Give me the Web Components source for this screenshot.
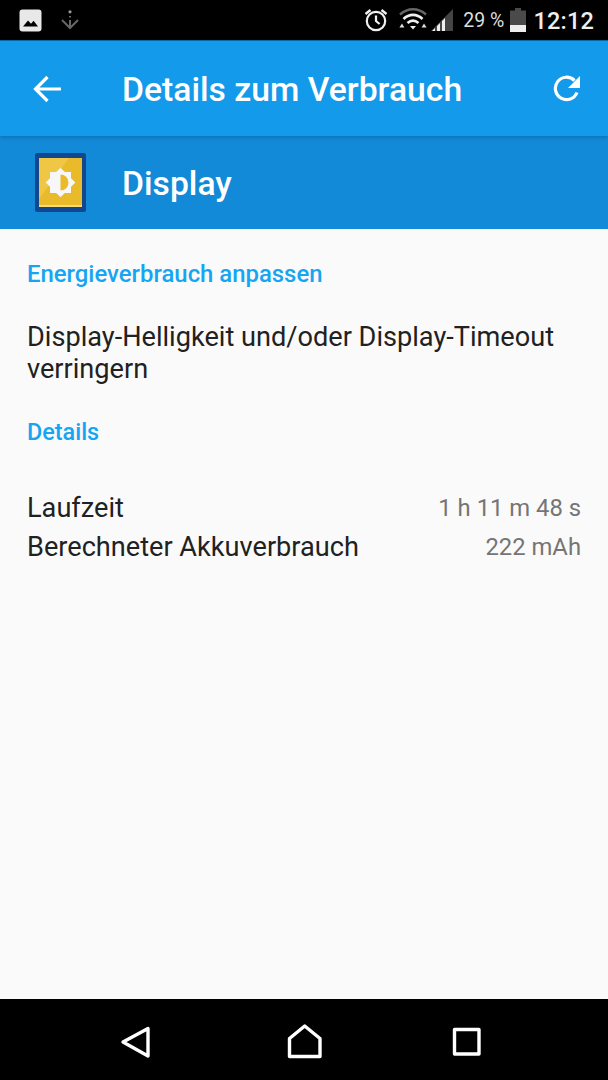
<!DOCTYPE html>
<html><head><meta charset="utf-8"><style>
html,body{margin:0;padding:0;background:#fafafa;font-family:Roboto,sans-serif}
</style></head><body>
<phone-screen>
<status-bar></status-bar>
<action-bar title="Details zum Verbrauch"></action-bar>
<app-header title="Display"></app-header>
<main-content>
<section-label style="--top:29px">Energieverbrauch anpassen</section-label>
<tip-text>Display-Helligkeit und/oder Display-Timeout verringern</tip-text>
<section-label style="--top:31px;--size:23.4px">Details</section-label>
<stat-list>
<stat-row value="1 h 11 m 48 s">Laufzeit</stat-row>
<stat-row value="222 mAh">Berechneter Akkuverbrauch</stat-row>
</stat-list>
</main-content>
<nav-bar></nav-bar>
</phone-screen>
<script>
function def(name,html){customElements.define(name,class extends HTMLElement{connectedCallback(){if(this.shadowRoot)return;const r=this.attachShadow({mode:'open'});let h=html;for(const a of this.getAttributeNames())h=h.split('{{'+a+'}}').join(this.getAttribute(a));r.innerHTML=h;}});}
def('phone-screen',`<style>:host{display:flex;flex-direction:column;width:608px;height:1080px;overflow:hidden;background:#fafafa}</style><slot></slot>`);
def('status-bar',`<style>:host{display:flex;align-items:center;height:41px;background:#000;color:#e6e6e6;box-sizing:border-box;flex:none;border-bottom:1px solid #0a6aa8}
svg{display:block;flex:none}.l{display:flex;align-items:center;gap:18px;margin-left:19px}.r{display:flex;align-items:center;margin-left:auto}
.p{font:19.500px/24px Roboto,sans-serif;margin:1px 0 0 9px;letter-spacing:0;color:#ddd}.t{font:500 23.500px/28px Roboto,sans-serif;margin:1px 14px 0 7px;color:#eee;letter-spacing:.2px}</style>
<div class="l">
<svg width="23" height="23" viewBox="0 0 23 23"><rect width="22" height="22" x=".5" y=".5" rx="3" fill="#e8e8e8"/><path d="M4 17.5l5-6 3 3.2 2.6-3 4.400 5.800z" fill="#000"/></svg>
<svg width="20" height="20" viewBox="0 0 20 20" fill="none"><circle cx="10" cy="1.8" r="1.6" fill="#999"/><path d="M10 6v1.6" stroke="#888" stroke-width="1.6"/><path d="M10 10v8M2 10l8 8 8-8" stroke="#666" stroke-width="2"/></svg>
</div>
<div class="r">
<svg width="26" height="26" viewBox="0 0 26 26" fill="none" stroke="#f0f0f0" stroke-width="2.2"><circle cx="13" cy="14" r="9.2"/><path d="M13 8.5V14l3.6 3"/><path d="M2.5 7l5-4M23.500 7l-5-4" stroke-width="2.4"/></svg>
<svg style="margin-left:10px" width="28" height="24" viewBox="0 0 28 24" fill="none"><path d="M1 6.500C9 -.5 19 -.5 27 6.500" stroke="#666" stroke-width="2.400"/><path d="M4.500 11C10 5.500 18 5.500 23.500 11" stroke="#f0f0f0" stroke-width="2.600"/><path d="M8.500 15c3.500-3 7.500-3 11 0" stroke="#f0f0f0" stroke-width="2.600"/><path d="M11 18h6l-3 3.500z" fill="#f0f0f0"/><path d="M3 16l-2.600 4h5zM25 16l-2.400 4h5z" transform="translate(0 -.5)" fill="#ddd"/></svg>
<svg style="margin-left:4px" width="23" height="24" viewBox="0 0 23 24"><path d="M0 23L22 1v22z" fill="#444"/><path d="M1 23h3v-3zM6 23h3v-8l-3 3zM11 23h3V10l-3 3z" fill="#eee"/></svg>
<span class="p">29 %</span>
<svg style="margin-left:6px" width="16" height="24" viewBox="0 0 16 24"><path d="M5 0h6v2.500h5V24H0V2.500h5z" fill="#4a4a4a"/><rect y="17" width="16" height="7" fill="#eee"/></svg>
<span class="t">12:12</span>
</div>`);
def('action-bar',`<style>:host{display:flex;align-items:center;height:95px;box-sizing:border-box;background:#149aea;color:#fff;flex:none;position:relative;z-index:1;box-shadow:0 2px 3px rgba(10,80,130,.35)}
svg{display:block;flex:none}.b{margin-left:33px}.t{margin:3px 0 0 60px;font:500 33.700px/40px Roboto,sans-serif;flex:1}.x{margin:-1px 26px 0 0}</style>
<svg class="b" width="29" height="28" viewBox="0 0 29 28" fill="none" stroke="#fff" stroke-width="3.200"><path d="M28 14H3M14.500 2L2.500 14l12 12"/></svg>
<span class="t">{{title}}</span>
<svg class="x" width="29" height="29" viewBox="0 0 29 29" fill="none"><path d="M24 18.500A11.200 11.200 0 1 1 21.500 6.500" stroke="#fff" stroke-width="3.200"/><path d="M27 2v12H15z" fill="#fff"/></svg>`);
def('app-header',`<style>:host{display:flex;align-items:center;height:93px;background:#128ad8;color:#fff;flex:none;box-shadow:0 1px 0 #e8f2f8}
svg{display:block;flex:none;margin-left:35px}.t{margin:3px 0 0 36px;font:500 33.700px/40px Roboto,sans-serif}</style>
<svg width="51" height="59" viewBox="0 0 51 59"><rect width="51" height="59" rx="2" fill="#10478e"/><rect x="4" y="5" width="43" height="49" fill="#e9bb2b"/><path d="M4 5h30L4 46z" fill="#f0c744"/><rect x="4" y="52" width="43" height="2" fill="#f5dc78"/>
<rect x="15" y="19" width="21" height="21" fill="#f7f7f7"/><rect x="15" y="19" width="21" height="21" transform="rotate(45 25.500 29.500)" fill="#f7f7f7"/><path d="M25.500 21.500a8 8 0 0 1 0 16z" fill="#e9bb2b"/></svg>
<span class="t">{{title}}</span>`);
def('main-content',`<style>:host{display:flex;flex-direction:column;flex:1;padding:0 27px;background:#fafafa;min-height:0}</style><slot></slot>`);
def('section-label',`<style>:host{display:block;margin-top:var(--top);font:500 var(--size,23.900px)/32px Roboto,sans-serif;color:#16a5f2}</style><slot></slot>`);
def('tip-text',`<style>:host{display:block;margin-top:31px;font:400 27.150px/32px Roboto,sans-serif;color:#212121}</style><slot></slot>`);
def('stat-list',`<style>:host{display:flex;flex-direction:column;margin-top:41px}</style><slot></slot>`);
def('stat-row',`<style>:host{display:flex;justify-content:space-between;align-items:center;height:38.500px;font:400 27.150px/32px Roboto,sans-serif;color:#212121}.v{font-size:23.800px;color:#757575}</style><span><slot></slot></span><span class="v">{{value}}</span>`);
def('nav-bar',`<style>:host{display:flex;height:81px;background:#000;flex:none;position:relative;justify-content:center;align-items:center}
.i{display:flex;width:608px}.i svg{position:absolute;display:block;fill:none;stroke:#fff;stroke-width:3.400;stroke-linejoin:round}</style>
<div class="i"><svg style="left:120px;top:27px" width="31" height="33" viewBox="0 0 31 33"><path d="M28 2.500v27.500L3 16z"/></svg>
<svg style="left:287px;top:25px" width="36" height="35" viewBox="0 0 36 35"><path d="M2.500 14.500L17.700 2 33 14.500v18H2.500z"/></svg>
<svg style="left:452px;top:28px" width="30" height="30" viewBox="0 0 30 30"><rect x="2.500" y="2.500" width="24.500" height="24.500"/></svg></div>`);
</script>
</body></html>
